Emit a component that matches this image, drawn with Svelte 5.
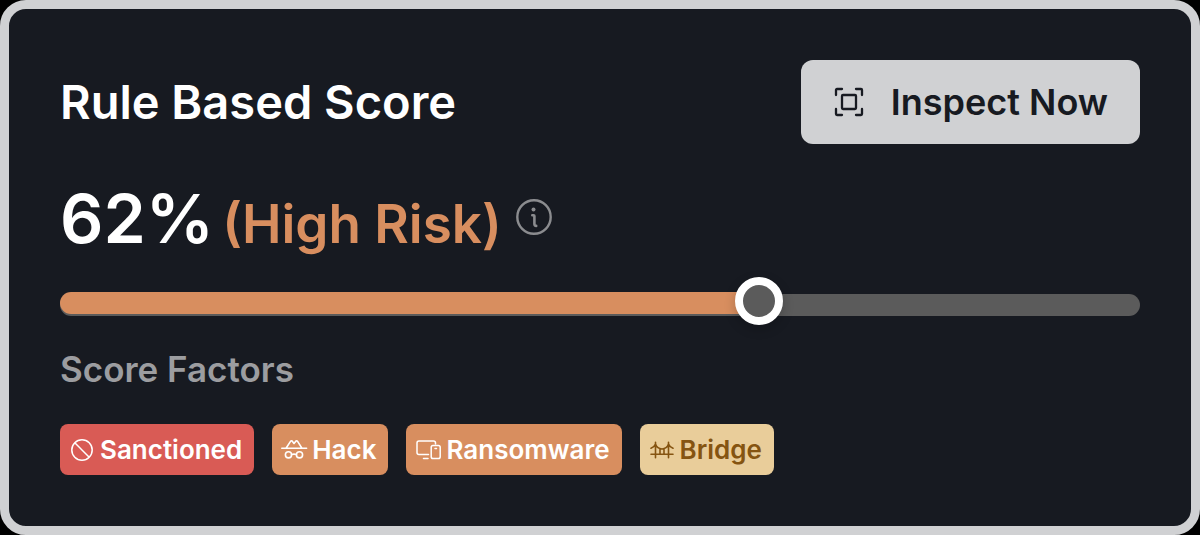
<script>
  let position = $state(65.4);
  const score = 62;
</script>

<main class="card">
  <header>
    <h1>Rule Based Score</h1>
    <button class="inspect" type="button">
      <svg width="30" height="30" viewBox="0 0 30 30" fill="none" stroke="currentColor" stroke-width="2.3" stroke-linecap="round" stroke-linejoin="round" aria-hidden="true">
        <path d="M8 2H3Q2 2 2 3V8M22 2h5q1 0 1 1v5M2 22v5q0 1 1 1h5M28 22v5q0 1-1 1h-5" />
        <rect x="8" y="8" width="14" height="14" rx="1" />
      </svg>
      <span>Inspect Now</span>
    </button>
  </header>

  <div class="score">
    <strong>{score}%</strong>
    <span class="risk">(High Risk)</span>
    <button class="info" type="button" aria-label="About this score">
      <svg width="36" height="36" viewBox="0 0 36 36" fill="none" stroke="currentColor" stroke-width="2.4" stroke-linecap="round" stroke-linejoin="round" aria-hidden="true">
        <circle cx="18" cy="18" r="16.7" />
        <path d="M16.3 16.3h1.3q.8 0 .8.8v8q0 1.8 1.8 1.8" stroke-width="2.6" />
        <circle cx="17.5" cy="10.5" r="2" fill="currentColor" stroke="none" />
      </svg>
    </button>
  </div>

  <div class="slider">
    <div class="rail"></div>
    <div class="fill" style="width: {position}%"></div>
    <input type="range" min="0" max="100" step="0.1" bind:value={position} aria-label="Rule based score" />
  </div>

  <h2>Score Factors</h2>

  <ul class="tags">
    <li class="red">
      <svg width="24" height="24" viewBox="0 0 24 24" fill="none" stroke="currentColor" stroke-width="1.5" aria-hidden="true">
        <circle cx="12" cy="12" r="10.2" />
        <path d="M4.8 4.8l14.4 14.4" />
      </svg>
      <span>Sanctioned</span>
    </li>
    <li class="orange">
      <svg width="28" height="24" viewBox="0 0 28 24" fill="none" stroke="currentColor" stroke-width="1.6" stroke-linecap="round" stroke-linejoin="round" aria-hidden="true">
        <path d="M1.8 10.3h24.8M6.2 10l4.3-6.6q.7-1 1.6-.4l1.9 2.5 2-2.5q.9-.6 1.6.4l4.2 6.6M11.6 16.6q2.4-1 4.8 0" />
        <circle cx="8.5" cy="16.8" r="3.1" />
        <circle cx="19.5" cy="16.8" r="3.1" />
      </svg>
      <span>Hack</span>
    </li>
    <li class="orange">
      <svg width="28" height="24" viewBox="0 0 28 24" fill="none" stroke="currentColor" stroke-width="1.5" stroke-linecap="round" stroke-linejoin="round" aria-hidden="true">
        <path d="M14.5 16.5H5q-2 0-2-2V5q0-2 2-2h14.5q2 0 2 2V6M9.500 20.600h4.500" />
        <rect x="17.200" y="7.500" width="9" height="13" rx="1.800" />
        <path d="M21 10.500h1.500" />
      </svg>
      <span>Ransomware</span>
    </li>
    <li class="sand">
      <svg width="24" height="24" viewBox="0 0 24 24" fill="none" stroke="currentColor" stroke-width="1.6" stroke-linecap="round" stroke-linejoin="round" aria-hidden="true">
        <path d="M1 16.300h22M5.500 4.200v15.600M18.500 4.200v15.600M1 10.300q3.200-1 4.500-4.200 1.700 4.900 6.500 4.900t6.500-4.900q1.300 3.200 4.500 4.200M10 11v5M14 11v5" />
      </svg>
      <span>Bridge</span>
    </li>
  </ul>
</main>

<style>
  :global(body) {
    margin: 0;
    background: #000;
  }
  .card {
    box-sizing: border-box;
    min-height: 100vh;
    padding: 51px 51px 50px;
    border: 9px solid #d0d1d3;
    border-radius: 26px;
    background: #171a21;
    color: #fff;
    font-family: Inter, sans-serif;
    font-weight: 600;
  }
  header {
    display: flex;
    align-items: center;
    justify-content: space-between;
    gap: 24px;
  }
  h1, h2 {
    margin: 0;
    font-weight: 600;
  }
  h1 {
    font-size: 47px;
    line-height: 84px;
  }
  button {
    border: 0;
    font: inherit;
    cursor: pointer;
  }
  svg {
    display: block;
    flex: none;
  }
  .inspect {
    display: flex;
    align-items: center;
    gap: 27px;
    padding: 0 32px 0 33px;
    border-radius: 12px;
    background: #d0d1d3;
    color: #171a21;
    font-size: 36px;
    line-height: 84px;
  }
  .score {
    display: flex;
    align-items: baseline;
    gap: 8px;
    margin-top: 30px;
    line-height: 88px;
  }
  .score strong {
    font-size: 68px;
    font-weight: 600;
  }
  .risk {
    color: #d88e5f;
    font-size: 53px;
  }
  .info {
    align-self: center;
    margin-left: 6px;
    padding: 0 0 8px;
    background: none;
    color: #8b8c8f;
  }
  .slider {
    display: grid;
    align-items: center;
    margin-top: 9px;
  }
  .slider > * {
    grid-area: 1 / 1;
  }
  .rail, .fill {
    height: 22px;
    border-radius: 11px;
  }
  .rail {
    margin-top: 8px;
    background: #5b5b5b;
  }
  .fill {
    margin-top: 4px;
    background: #d88e5f;
  }
  input {
    appearance: none;
    width: 100%;
    height: 48px;
    margin: 0;
    background: transparent;
    cursor: pointer;
  }
  input::-webkit-slider-thumb {
    appearance: none;
    box-sizing: border-box;
    width: 48px;
    height: 48px;
    border: 8px solid #fff;
    border-radius: 50%;
    background: #5b5b5b;
    box-shadow: 0 4px 12px #0003;
  }
  h2 {
    margin-top: 22px;
    color: #9c9da0;
    font-size: 35px;
    line-height: 44px;
  }
  .tags {
    display: flex;
    flex-wrap: wrap;
    gap: 18px;
    margin: 33px 0 0;
    padding: 0;
    list-style: none;
    font-size: 26px;
    line-height: 51px;
  }
  li {
    display: flex;
    align-items: center;
    gap: 6px;
    padding: 0 12px 0 10px;
    border-radius: 8px;
  }
  .red {
    background: #d95b55;
  }
  .orange {
    gap: 4px;
    padding-left: 8px;
    background: #d88e5f;
  }
  .sand {
    background: #e9cd9a;
    color: #855411;
  }
</style>
